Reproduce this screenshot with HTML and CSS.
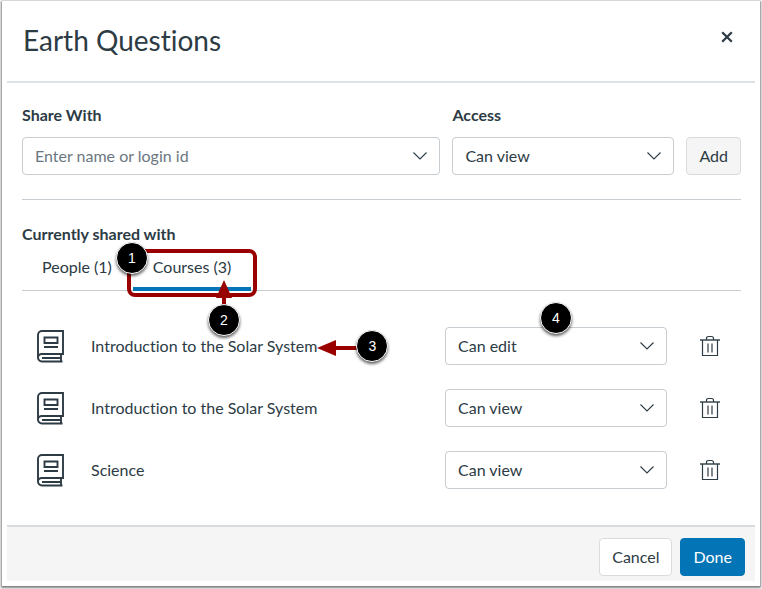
FILE: index.html
```
<!DOCTYPE html>
<html lang="en">
<head>
    <meta charset="UTF-8">
    <meta name="viewport" content="width=device-width, initial-scale=1.0">
    <title>Earth Questions</title>
    <link rel="stylesheet" href="styles.css">
</head>
<body>
<svg class="sprite" aria-hidden="true">
    <symbol id="icon-book" viewBox="0 0 28 34">
        <path d="M5 2h21v23H5a3.500 3.500 0 0 0-4 3V6a4 4 0 0 1 4-4zM1 28a4 4 0 0 0 4 4.500h20.500M5 29h18M24 25v7" stroke-width="1.900"/>
        <path d="M7.500 8.500h13v5.500h-13zM7 18h14" stroke-width="1.900"/>
    </symbol>
    <symbol id="icon-trash" viewBox="0 0 20 22">
        <path d="M0 5h20" stroke-width="1.400"/>
        <path d="M2.500 5v15.500h15V5M6.500 5V3.500q0-2 2-2h3q2 0 2 2V5M8 8.500v9M12 8.500v9" stroke-width="1.200"/>
    </symbol>
    <symbol id="icon-arrow" viewBox="0 0 14 8">
        <path d="M.5.500L7 7l6.500-6.500" stroke-width="1.100"/>
    </symbol>
</svg>
<div class="modal" role="dialog" aria-labelledby="title">
    <header class="modal-header">
        <h1 id="title">Earth Questions</h1>
        <button class="close" type="button" aria-label="Close">
            <svg viewBox="0 0 10 10"><path d="M1 1l8 8M9 1L1 9" stroke-width="1.900"/></svg>
        </button>
    </header>

    <main class="modal-body">
        <form class="share-form">
            <div class="field grow">
                <label for="share-with">Share With</label>
                <div class="control">
                    <input id="share-with" type="text" placeholder="Enter name or login id">
                    <svg class="arrow"><use href="#icon-arrow"/></svg>
                </div>
            </div>
            <div class="field">
                <label for="access">Access</label>
                <div class="control access">
                    <select id="access">
                        <option>Can view</option>
                        <option>Can edit</option>
                    </select>
                    <svg class="arrow"><use href="#icon-arrow"/></svg>
                </div>
            </div>
            <button class="btn btn-light" type="button">Add</button>
        </form>

        <section class="shared">
            <h2>Currently shared with</h2>
            <div class="tabs" role="tablist">
                <button class="tab" type="button" role="tab">People (1)</button>
                <div class="tab-wrap">
                    <button class="tab active" type="button" role="tab" aria-selected="true">Courses (3)</button>
                    <div class="highlight"></div>
                    <svg class="pointer pointer-up" viewBox="0 0 16 28"><path d="M8 0l8 18h-6v10H6V18H0z"/></svg>
                    <span class="badge badge-1">1</span>
                    <span class="badge badge-2">2</span>
                </div>
            </div>

            <ul class="courses">
                <li>
                    <svg class="book"><use href="#icon-book"/></svg>
                    <span class="name">
                        <span class="name-text" id="course-1">Introduction to the Solar System
                            <svg class="pointer pointer-left" viewBox="0 0 42 16"><path d="M0 8l19-8v6h23v4H19v6z"/></svg>
                            <span class="badge badge-3">3</span>
                        </span>
                    </span>
                    <div class="control access">
                        <select aria-labelledby="course-1">
                            <option>Can view</option>
                            <option selected>Can edit</option>
                        </select>
                        <svg class="arrow"><use href="#icon-arrow"/></svg>
                        <span class="badge badge-4">4</span>
                    </div>
                    <button class="trash" type="button" aria-label="Remove"><svg><use href="#icon-trash"/></svg></button>
                </li>
                <li>
                    <svg class="book"><use href="#icon-book"/></svg>
                    <span class="name" id="course-2">Introduction to the Solar System</span>
                    <div class="control access">
                        <select aria-labelledby="course-2">
                            <option>Can view</option>
                            <option>Can edit</option>
                        </select>
                        <svg class="arrow"><use href="#icon-arrow"/></svg>
                    </div>
                    <button class="trash" type="button" aria-label="Remove"><svg><use href="#icon-trash"/></svg></button>
                </li>
                <li>
                    <svg class="book"><use href="#icon-book"/></svg>
                    <span class="name" id="course-3">Science</span>
                    <div class="control access">
                        <select aria-labelledby="course-3">
                            <option>Can view</option>
                            <option>Can edit</option>
                        </select>
                        <svg class="arrow"><use href="#icon-arrow"/></svg>
                    </div>
                    <button class="trash" type="button" aria-label="Remove"><svg><use href="#icon-trash"/></svg></button>
                </li>
            </ul>
        </section>
    </main>

    <footer class="modal-footer">
        <button class="btn" type="button">Cancel</button>
        <button class="btn btn-primary" type="button">Done</button>
    </footer>
</div>
</body>
</html>
```
FILE: styles.css
```
* {
    box-sizing: border-box;
}

body {
    margin: 0;
    padding: 1px 2px 3px;
    background: #fff;
    color: #2d3b45;
    font: 16px/24px Lato, sans-serif;
    font-variant-ligatures: none;
}

h1, h2, ul {
    margin: 0;
    padding: 0;
}

button, input, select {
    font: inherit;
    color: inherit;
}

svg {
    display: block;
    fill: none;
    stroke: #2d3b45;
}

.sprite {
    position: absolute;
    width: 0;
    height: 0;
}

.modal {
    padding: 5px;
    background: #fff;
    box-shadow: 0 1px 2px 1px rgba(0, 0, 0, .5);
}

.modal-header {
    display: flex;
    justify-content: space-between;
    align-items: flex-start;
    padding: 16px 21px 23px 16px;
    border-bottom: 2px solid #dde2e6;
}

h1 {
    font-size: 28px;
    line-height: 36px;
    font-weight: 400;
}

.close {
    margin-top: 8px;
    padding: 1px;
    border: 0;
    background: none;
}

.close svg {
    width: 12px;
    height: 12px;
}

.modal-body {
    padding: 20px 14px 36px 15px;
}

.share-form {
    display: flex;
    align-items: flex-end;
    gap: 12px;
    padding-bottom: 24px;
    border-bottom: 1px solid #c7cdd1;
}

.grow {
    flex: 1;
}

.field label {
    display: block;
    margin-bottom: 10px;
    font-weight: 700;
}

.control {
    position: relative;
}

.access {
    width: 222px;
}

.control input, .control select {
    display: block;
    width: 100%;
    height: 38px;
    padding: 0 12px;
    border: 1px solid #c7cdd1;
    border-radius: 4px;
    background: #fff;
    appearance: none;
}

.control input {
    padding-bottom: 2px;
}

.control input::placeholder {
    color: #6b7780;
    opacity: 1;
}

.arrow {
    position: absolute;
    top: 15px;
    right: 13px;
    width: 14px;
    height: 8px;
    pointer-events: none;
}

.btn {
    height: 38px;
    padding: 0 12px;
    border: 1px solid #d9dcde;
    border-radius: 4px;
    background: #fff;
}

.btn-light {
    background: #f5f5f5;
}

.btn-primary {
    border-color: #0374b5;
    background: #0374b5;
    color: #fff;
}

.shared {
    padding-top: 22px;
}

h2 {
    font-size: 16px;
    line-height: 24px;
}

.tabs {
    display: flex;
    gap: 1px;
    border-bottom: 1px solid #c7cdd1;
}

.tab {
    height: 44px;
    padding: 0 20px 3px;
    border: 0;
    background: none;
}

.tab-wrap {
    position: relative;
    margin-bottom: -1px;
}

.tab.active {
    height: 45px;
    padding-bottom: 0;
    border-bottom: 4px solid #0374b5;
}

.highlight {
    position: absolute;
    top: 3px;
    right: -6px;
    bottom: -6px;
    left: -6px;
    border: 4px solid #900;
    border-radius: 8px;
}

.pointer {
    position: absolute;
    fill: #900;
    stroke: none;
}

.pointer-up {
    top: 34px;
    left: 83px;
    width: 16px;
    height: 28px;
}

.pointer-left {
    top: 6px;
    left: 100%;
    width: 42px;
    height: 16px;
}

.badge {
    position: absolute;
    width: 32px;
    height: 32px;
    border: 1px solid #fff;
    border-radius: 50%;
    background: #000;
    box-shadow: 0 2px 3px rgba(0, 0, 0, .6);
    color: #fff;
    font: 14px/30px "Liberation Sans", sans-serif;
    text-align: center;
}

.badge-1 {
    top: -4px;
    left: -17px;
}

.badge-2 {
    top: 58px;
    left: 75px;
}

.badge-3 {
    top: -4px;
    left: calc(100% + 39px);
}

.badge-4 {
    top: -25px;
    left: 95px;
}

.courses {
    display: grid;
    gap: 24px;
    padding-top: 36px;
    list-style: none;
}

.courses li {
    display: flex;
    align-items: center;
}

.book {
    width: 28px;
    height: 34px;
    margin: 0 26px 0 15px;
}

.name {
    flex: 1;
}

.name-text {
    position: relative;
    display: inline-block;
}

.trash {
    margin: 0 20px 0 32px;
    padding: 0;
    border: 0;
    background: none;
}

.trash svg {
    width: 22px;
    height: 22px;
}

.modal-footer {
    display: flex;
    justify-content: flex-end;
    gap: 8px;
    padding: 11px 10px 5px;
    border-top: 2px solid #d9dcde;
    background: #f5f5f5;
}
```
